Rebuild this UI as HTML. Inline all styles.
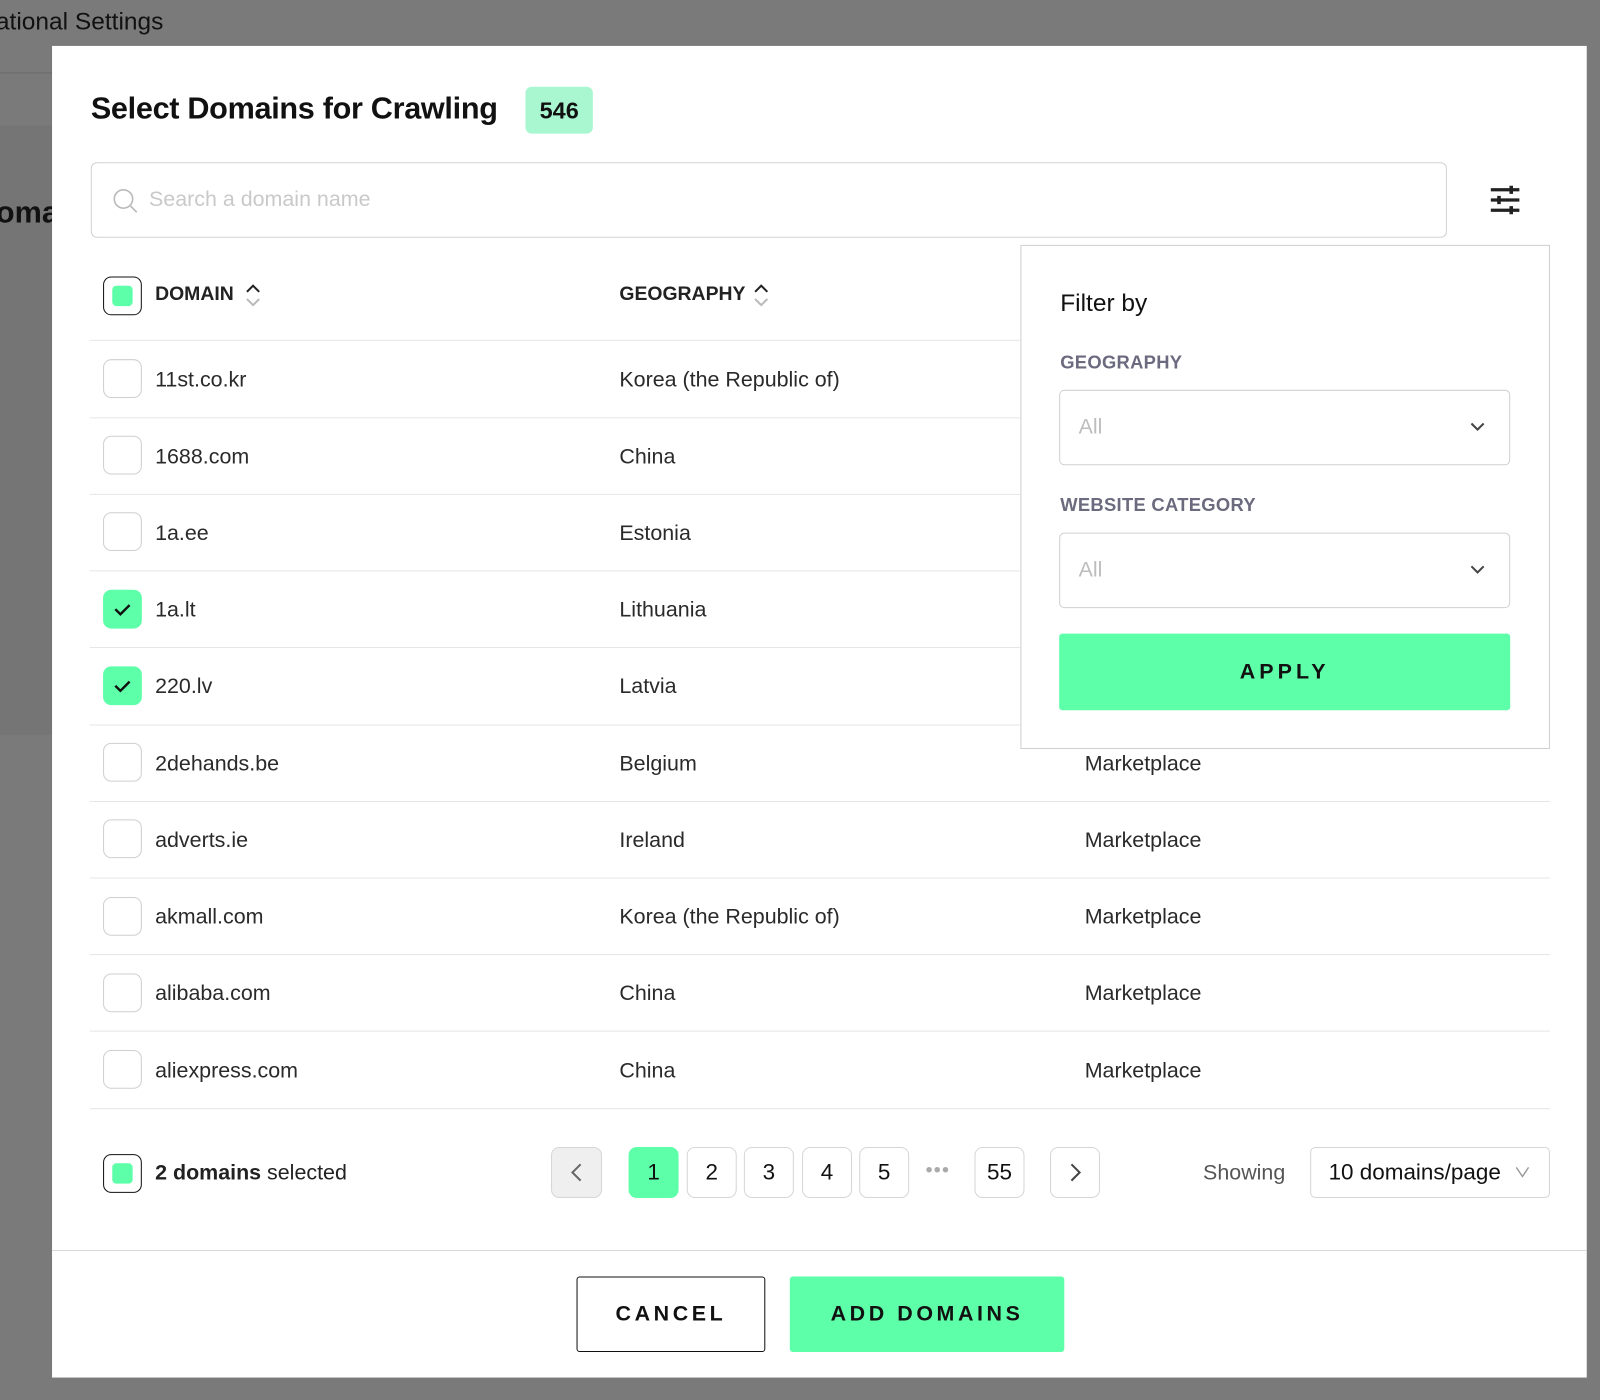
<!DOCTYPE html>
<html><head><meta charset="utf-8"><style>
*{box-sizing:border-box;margin:0;padding:0}
body{width:1600px;height:1400px;overflow:hidden;background:#7a7a7a;font-family:"Liberation Sans",sans-serif;color:#222}
#w{position:absolute;left:0;top:0;width:1568px;height:1372px;transform:scale(1.020408);transform-origin:0 0}
.a{position:absolute}
.cb{position:absolute;left:101px;width:38px;height:38px;border:1px solid #cfcfcf;border-radius:8px;background:#fff}
.cb.on{background:#5effa9;border:none}
.cb.part{border:1.5px solid #111}
.cb.part:after{content:"";position:absolute;left:8px;top:8px;width:20px;height:20px;border-radius:4px;background:#5effa9}
.t{position:absolute;font-size:21px;color:#2a2a2a;line-height:24px}
.line{position:absolute;left:88px;width:1431px;height:1px;background:#e6e6e6}
.pg{position:absolute;top:1124px;width:50px;height:50px;border:1px solid #d6d6d6;border-radius:8px;background:#fff;font-size:22px;text-align:center;line-height:48px;color:#111}
.sel{position:absolute;left:1038px;width:442px;height:74px;border:1px solid #d0d0d0;border-radius:5px;font-size:21px;color:#bdbdbd;padding-left:18px;line-height:72px}
.lbl{position:absolute;left:1039px;font-size:18px;font-weight:bold;color:#6b6a7e;letter-spacing:.3px}
</style></head><body><div id="w">
<div class="a" style="left:-4px;top:8px;font-size:24px;color:#111">ational Settings</div>
<div class="a" style="left:0;top:71px;width:51px;height:1px;background:#6a6a6a"></div>
<div class="a" style="left:0;top:123px;width:51px;height:597px;background:#757575"></div>
<div class="a" style="left:-4px;top:192px;font-size:30px;font-weight:bold;color:#111">oma</div>

<div class="a" style="left:51px;top:45px;width:1504px;height:1305px;background:#fff"></div>
<div class="a" style="left:89px;top:90px;font-size:30px;font-weight:bold;color:#111;letter-spacing:-0.3px">Select Domains for Crawling</div>
<div class="a" style="left:515px;top:85px;width:66px;height:46px;background:#a8f7d1;border-radius:6px;font-size:23px;font-weight:bold;text-align:center;line-height:46px;color:#111">546</div>

<div class="a" style="left:89px;top:159px;width:1329px;height:74px;border:1px solid #d2d2d2;border-radius:6px"></div>
<svg class="a" style="left:109px;top:183px" width="28" height="28" viewBox="0 0 28 28"><circle cx="12" cy="12" r="9" fill="none" stroke="#bbb" stroke-width="1.6"/><path d="M19 19l6 6" stroke="#bbb" stroke-width="1.6"/></svg>
<div class="a" style="left:146px;top:184px;font-size:21px;color:#c9c9c9">Search a domain name</div>
<svg class="a" style="left:1460px;top:181px" width="30" height="30" viewBox="0 0 30 30" stroke="#222" fill="none"><path d="M1 5h28M1 15h28M1 25h28" stroke-width="3.2"/><path d="M21 1v8M9 11v8M21 21v8" stroke-width="3.5"/></svg>

<div class="cb part" style="top:271px"></div>
<div class="a" style="left:152px;top:278px;font-size:19px;font-weight:bold;color:#222">DOMAIN</div>
<svg class="a" style="left:240px;top:278px" width="16" height="24" viewBox="0 0 16 24" fill="none" stroke-width="2"><path d="M2 8l6-6 6 6" stroke="#222"/><path d="M2 15l6 6 6-6" stroke="#bbb"/></svg>
<div class="a" style="left:607px;top:278px;font-size:19px;font-weight:bold;color:#222">GEOGRAPHY</div>
<svg class="a" style="left:738px;top:278px" width="16" height="24" viewBox="0 0 16 24" fill="none" stroke-width="2"><path d="M2 8l6-6 6 6" stroke="#222"/><path d="M2 15l6 6 6-6" stroke="#bbb"/></svg>

<div class="line" style="top:333px"></div>
<div class="cb" style="top:352px"></div><div class="t" style="left:152px;top:361px">11st.co.kr</div><div class="t" style="left:607px;top:361px">Korea (the Republic of)</div>
<div class="line" style="top:409px"></div>
<div class="cb" style="top:427px"></div><div class="t" style="left:152px;top:436px">1688.com</div><div class="t" style="left:607px;top:436px">China</div>
<div class="line" style="top:484px"></div>
<div class="cb" style="top:502px"></div><div class="t" style="left:152px;top:511px">1a.ee</div><div class="t" style="left:607px;top:511px">Estonia</div>
<div class="line" style="top:559px"></div>
<div class="cb on" style="top:578px"><svg width="38" height="38"><path d="M12 19l5 5 9-9" fill="none" stroke="#111" stroke-width="2.4"/></svg></div><div class="t" style="left:152px;top:586px">1a.lt</div><div class="t" style="left:607px;top:586px">Lithuania</div>
<div class="line" style="top:634px"></div>
<div class="cb on" style="top:653px"><svg width="38" height="38"><path d="M12 19l5 5 9-9" fill="none" stroke="#111" stroke-width="2.4"/></svg></div><div class="t" style="left:152px;top:661px">220.lv</div><div class="t" style="left:607px;top:661px">Latvia</div>
<div class="line" style="top:710px"></div>
<div class="cb" style="top:728px"></div><div class="t" style="left:152px;top:737px">2dehands.be</div><div class="t" style="left:607px;top:737px">Belgium</div><div class="t" style="left:1063px;top:737px">Marketplace</div>
<div class="line" style="top:785px"></div>
<div class="cb" style="top:803px"></div><div class="t" style="left:152px;top:812px">adverts.ie</div><div class="t" style="left:607px;top:812px">Ireland</div><div class="t" style="left:1063px;top:812px">Marketplace</div>
<div class="line" style="top:860px"></div>
<div class="cb" style="top:879px"></div><div class="t" style="left:152px;top:887px">akmall.com</div><div class="t" style="left:607px;top:887px">Korea (the Republic of)</div><div class="t" style="left:1063px;top:887px">Marketplace</div>
<div class="line" style="top:935px"></div>
<div class="cb" style="top:954px"></div><div class="t" style="left:152px;top:962px">alibaba.com</div><div class="t" style="left:607px;top:962px">China</div><div class="t" style="left:1063px;top:962px">Marketplace</div>
<div class="line" style="top:1010px"></div>
<div class="cb" style="top:1029px"></div><div class="t" style="left:152px;top:1038px">aliexpress.com</div><div class="t" style="left:607px;top:1038px">China</div><div class="t" style="left:1063px;top:1038px">Marketplace</div>
<div class="line" style="top:1086px"></div>

<div class="a" style="left:1000px;top:240px;width:519px;height:494px;border:1px solid #d0d0d0;background:#fff"></div>
<div class="a" style="left:1039px;top:284px;font-size:24px;color:#111">Filter by</div>
<div class="lbl" style="top:345px">GEOGRAPHY</div>
<div class="sel" style="top:382px">All</div>
<svg class="a" style="left:1440px;top:412px" width="16" height="12"><path d="M2 3l6 6 6-6" fill="none" stroke="#444" stroke-width="2"/></svg>
<div class="lbl" style="top:485px">WEBSITE CATEGORY</div>
<div class="sel" style="top:522px">All</div>
<svg class="a" style="left:1440px;top:552px" width="16" height="12"><path d="M2 3l6 6 6-6" fill="none" stroke="#444" stroke-width="2"/></svg>
<div class="a" style="left:1038px;top:621px;width:442px;height:75px;background:#5effa9;border-radius:3px;text-align:center;line-height:75px;font-size:21px;font-weight:bold;letter-spacing:4px;color:#111">APPLY</div>

<div class="cb part" style="top:1131px"></div>
<div class="a" style="left:152px;top:1138px;font-size:21px;color:#222"><b>2 domains</b> selected</div>
<div class="pg" style="left:540px;background:#efefef"><svg width="48" height="48"><path d="M28 16l-8 8 8 8" fill="none" stroke="#666" stroke-width="2"/></svg></div>
<div class="pg" style="left:616px;width:49px;background:#5effa9;border-color:#5effa9">1</div>
<div class="pg" style="left:673px;width:49px">2</div>
<div class="pg" style="left:729px;width:49px">3</div>
<div class="pg" style="left:786px;width:49px">4</div>
<div class="pg" style="left:842px;width:49px">5</div>
<div class="a" style="left:907px;top:1136px;font-size:20px;color:#aaa;letter-spacing:1px">•••</div>
<div class="pg" style="left:955px;width:49px">55</div>
<div class="pg" style="left:1029px;width:49px"><svg width="48" height="48"><path d="M20 16l8 8-8 8" fill="none" stroke="#444" stroke-width="2"/></svg></div>
<div class="a" style="left:1179px;top:1138px;font-size:21px;color:#555">Showing</div>
<div class="a" style="left:1284px;top:1124px;width:235px;height:50px;border:1px solid #d6d6d6;border-radius:5px;font-size:22px;color:#111;line-height:48px;padding-left:17px">10 domains/page</div>
<svg class="a" style="left:1484px;top:1142px" width="16" height="12"><path d="M2 2l6 9 6-9" fill="none" stroke="#999" stroke-width="1.4"/></svg>

<div class="a" style="left:51px;top:1225px;width:1504px;height:1px;background:#d8d8d8"></div>
<div class="a" style="left:565px;top:1251px;width:185px;height:74px;border:1.5px solid #111;border-radius:3px;text-align:center;line-height:72px;font-size:21px;font-weight:bold;letter-spacing:3.5px;color:#111">CANCEL</div>
<div class="a" style="left:774px;top:1251px;width:269px;height:74px;background:#5effa9;border-radius:3px;text-align:center;line-height:74px;font-size:21px;font-weight:bold;letter-spacing:3.5px;color:#111">ADD DOMAINS</div>
</div></body></html>
